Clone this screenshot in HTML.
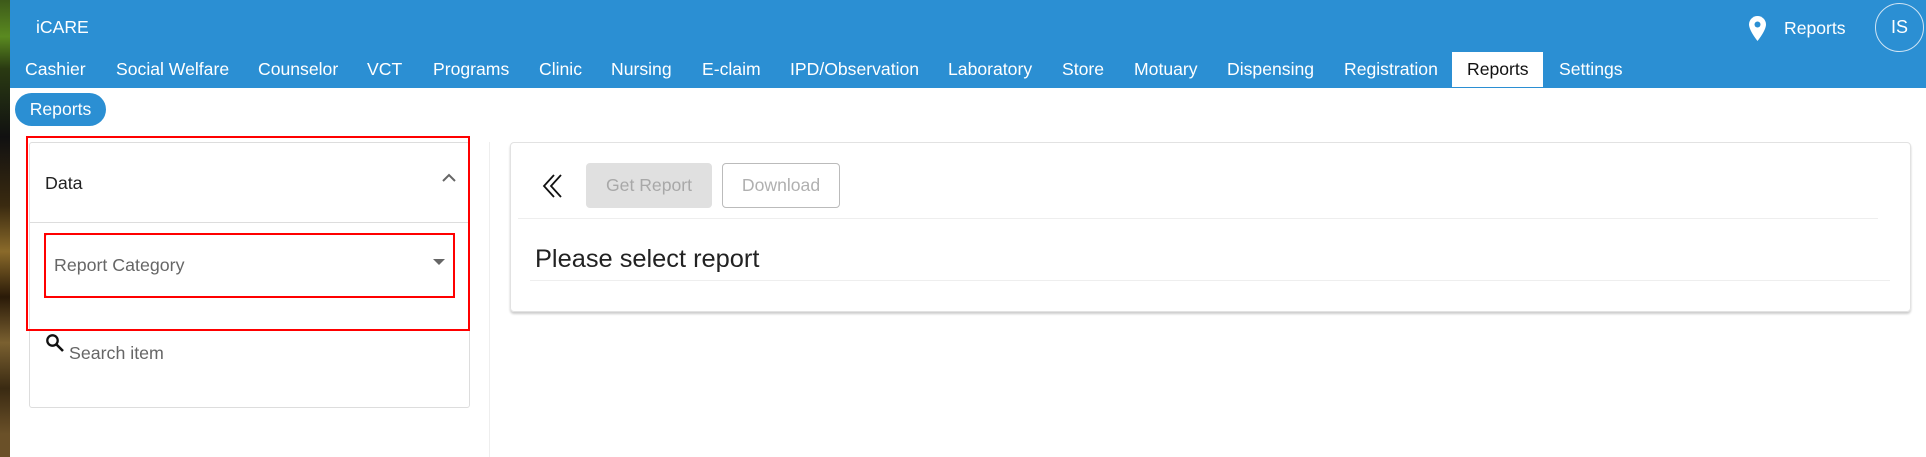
<!DOCTYPE html>
<html><head><meta charset="utf-8"><style>
*{margin:0;padding:0;box-sizing:border-box}
body{width:1926px;height:457px;position:relative;overflow:hidden;background:#fff;font-family:"Liberation Sans",sans-serif}
.a{position:absolute;white-space:nowrap}
.strip{left:0;top:0;width:10px;height:457px;background:linear-gradient(#3d5a1a 0,#5a8a20 8%,#2a3a12 15%,#111 30%,#3a2a10 45%,#8a6a2a 55%,#2a1a08 65%,#7a6030 75%,#3a2a12 85%,#6a5028 95%)}
.hdr{left:10px;top:0;width:1916px;height:88px;background:#2b8fd3}
.t{top:58px;font-size:17.6px;color:#fff;line-height:22px}
</style></head><body>
<div class="a strip"></div>
<div class="a hdr"></div>
<div class="a" style="left:36px;top:16px;font-size:17.6px;color:#fff;line-height:22px">iCARE</div>
<div class="a t" style="left:25px">Cashier</div>
<div class="a t" style="left:116px">Social Welfare</div>
<div class="a t" style="left:258px">Counselor</div>
<div class="a t" style="left:367px">VCT</div>
<div class="a t" style="left:433px">Programs</div>
<div class="a t" style="left:539px">Clinic</div>
<div class="a t" style="left:611px">Nursing</div>
<div class="a t" style="left:702px">E-claim</div>
<div class="a t" style="left:790px">IPD/Observation</div>
<div class="a t" style="left:948px">Laboratory</div>
<div class="a t" style="left:1062px">Store</div>
<div class="a t" style="left:1134px">Motuary</div>
<div class="a t" style="left:1227px">Dispensing</div>
<div class="a t" style="left:1344px">Registration</div>
<div class="a" style="left:1452px;top:52px;width:91px;height:35px;background:#fff"></div>
<div class="a t" style="left:1467px;color:#111">Reports</div>
<div class="a t" style="left:1559px">Settings</div>
<svg class="a" style="left:1749px;top:16px" width="17" height="25" viewBox="0 0 17 25"><path d="M8.5 0C3.8 0 0 3.8 0 8.5 0 14.5 8.5 25 8.5 25S17 14.5 17 8.5C17 3.8 13.2 0 8.5 0z" fill="#fff"/><circle cx="8.5" cy="8.5" r="3" fill="#2b8fd3"/></svg>
<div class="a" style="left:1784px;top:17px;font-size:17.6px;color:#fff;line-height:22px">Reports</div>
<div class="a" style="left:1875px;top:3px;width:49px;height:49px;border:1px solid #cfe4f4;border-radius:50%;color:#fff;font-size:18px;line-height:47px;text-align:center">IS</div>
<div class="a" style="left:15px;top:93px;width:91px;height:33px;border-radius:17px;background:#2b8fd3;color:#fff;font-size:17.6px;line-height:33px;text-align:center">Reports</div>
<!-- left card -->
<div class="a" style="left:29px;top:142px;width:441px;height:266px;border:1px solid #ddd;border-radius:3px"></div>
<div class="a" style="left:29px;top:222px;width:441px;height:1px;background:#ddd"></div>
<div class="a" style="left:45px;top:172px;font-size:17.8px;color:#222;line-height:22px">Data</div>
<svg class="a" style="left:441px;top:173px" width="16" height="10" viewBox="0 0 16 10"><path d="M2 8L8 2l6 6" fill="none" stroke="#666" stroke-width="2"/></svg>
<div class="a" style="left:45px;top:234px;width:410px;height:63px;border:1px solid #ccc;border-radius:3px"></div>
<div class="a" style="left:54px;top:254px;font-size:17.8px;color:#666;line-height:22px">Report Category</div>
<svg class="a" style="left:433px;top:259px" width="12" height="7" viewBox="0 0 12 7"><path d="M0 0h12L6 6z" fill="#666"/></svg>
<svg class="a" style="left:45px;top:333px" width="20" height="20" viewBox="0 0 20 20"><circle cx="7.5" cy="7.5" r="5.2" fill="none" stroke="#111" stroke-width="2.3"/><path d="M11.5 11.5L18 18" stroke="#111" stroke-width="2.6"/></svg>
<div class="a" style="left:69px;top:342px;font-size:17.8px;color:#666;line-height:22px">Search item</div>
<div class="a" style="left:26px;top:136px;width:444px;height:195px;border:2px solid #f00"></div>
<div class="a" style="left:44px;top:233px;width:411px;height:65px;border:2px solid #f00"></div>
<div class="a" style="left:489px;top:142px;width:1px;height:315px;background:#eee"></div>
<!-- right card -->
<div class="a" style="left:510px;top:142px;width:1401px;height:170px;border:1px solid #e2e2e2;border-radius:4px;box-shadow:0 2px 2px rgba(0,0,0,.2)"></div>
<svg class="a" style="left:542px;top:174px" width="22" height="24" viewBox="0 0 22 24"><path d="M12 1L2 12l10 11M19 1L9 12l10 11" fill="none" stroke="#111" stroke-width="1.8"/></svg>
<div class="a" style="left:586px;top:163px;width:126px;height:45px;background:#e0e0e0;border-radius:4px;color:#a8a8a8;font-size:17.6px;line-height:45px;text-align:center">Get Report</div>
<div class="a" style="left:722px;top:163px;width:118px;height:45px;border:1px solid #bbb;border-radius:4px;color:#b0b0b0;font-size:17.6px;line-height:43px;text-align:center">Download</div>
<div class="a" style="left:518px;top:218px;width:1360px;height:1px;background:#eee"></div>
<div class="a" style="left:535px;top:244px;font-size:25.4px;color:#222;line-height:30px">Please select report</div>
<div class="a" style="left:530px;top:280px;width:1360px;height:1px;background:#eee"></div>
</body></html>
